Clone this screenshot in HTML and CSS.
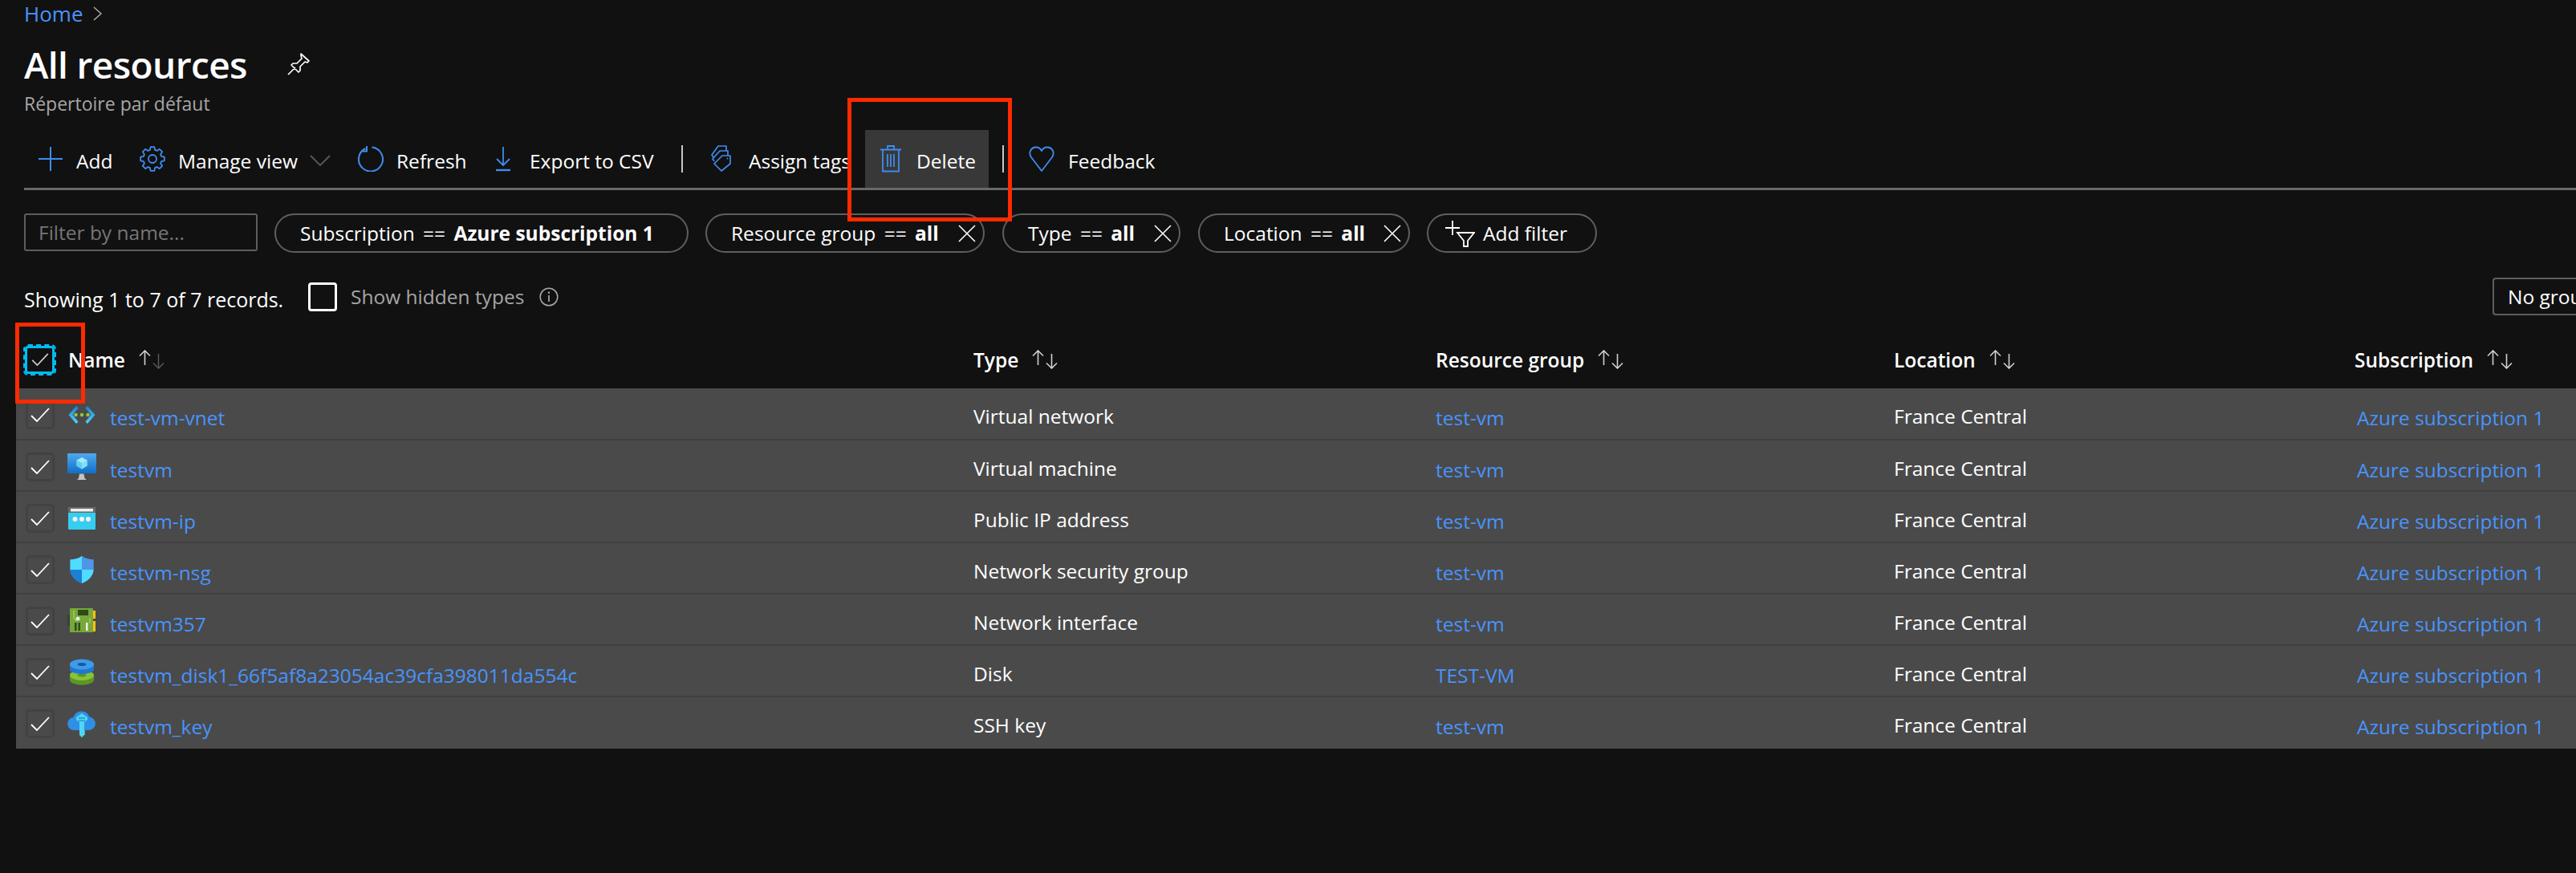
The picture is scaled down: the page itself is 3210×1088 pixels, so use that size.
FILE: index.html
```html
<!DOCTYPE html>
<html lang="en">
<head>
<meta charset="utf-8">
<title>All resources</title>
<link rel="stylesheet" href="styles.css">
</head>
<body>
<svg class="defs" width="0" height="0" aria-hidden="true">
  <symbol id="tick" viewBox="0 0 24 18"><path d="M1 10l7 7L23 1" fill="none" stroke="#fff" stroke-width="1.800"/></symbol>
  <symbol id="sort" viewBox="0 0 32 24"><path d="M7.500 19V1M1 7.500l6.500-6.500L14 7.500" fill="none" stroke="#d0d0d0" stroke-width="1.600"/><path d="M24.500 5v18M18 16.500l6.500 6.500L31 16.500" fill="none" stroke="#d0d0d0" stroke-width="1.600"/></symbol>
  <symbol id="sort-up" viewBox="0 0 32 24"><path d="M7.500 19V1M1 7.500l6.500-6.500L14 7.500" fill="none" stroke="#d0d0d0" stroke-width="1.600"/><path d="M24.500 5v18M18 16.500l6.500 6.500L31 16.500" fill="none" stroke="#555" stroke-width="1.600"/></symbol>
  <symbol id="close" viewBox="0 0 22 22"><path d="M1 1l20 20M21 1L1 21" fill="none" stroke="#fff" stroke-width="1.600"/></symbol>
</svg>

<nav class="crumb"><a class="link" href="#">Home</a>
  <svg class="crumb-chev" viewBox="0 0 12 18"><path d="M1 1l9 8-9 8" fill="none" stroke="#b0b0b0" stroke-width="1.400"/></svg>
</nav>
<header class="head">
  <h1 class="title">All resources</h1>
  <svg class="pin" viewBox="0 0 30 30"><path d="M18 2l10 9-2 2-3-1-6 6 0 5-2 2-9-9 2-2 5 0 6-6-1-4zM11 19L2 28" fill="none" stroke="#fff" stroke-width="1.700" stroke-linejoin="round"/></svg>
</header>
<p class="sub">Répertoire par défaut</p>

<div class="toolbar">
  <div class="tool w-add"><svg class="ti" viewBox="0 0 32 32"><path d="M16 1v30M1 16h30" fill="none" stroke="#3f8cf0" stroke-width="2"/></svg><span class="tl tl-add">Add</span></div>
  <div class="tool w-manage"><svg class="ti" viewBox="0 0 32 32"><polygon points="12.830,4.950 13.650,1.180 18.350,1.180 19.170,4.950 21.580,5.940 24.820,3.860 28.140,7.180 26.060,10.420 27.050,12.830 30.820,13.650 30.820,18.350 27.050,19.170 26.060,21.580 28.140,24.820 24.820,28.140 21.580,26.060 19.170,27.050 18.350,30.820 13.650,30.820 12.830,27.050 10.420,26.060 7.180,28.140 3.860,24.820 5.940,21.580 4.950,19.170 1.180,18.350 1.180,13.650 4.950,12.830 5.940,10.420 3.860,7.180 7.180,3.860 10.420,5.940" fill="none" stroke="#3f8cf0" stroke-width="1.800" stroke-linejoin="round"/><circle cx="16" cy="16" r="5" fill="none" stroke="#3f8cf0" stroke-width="1.800"/></svg><span class="tl tl-manage">Manage view</span><svg class="chev" viewBox="0 0 26 15"><path d="M1 1l12 12L25 1" fill="none" stroke="#5a5a5a" stroke-width="1.800"/></svg></div>
  <div class="tool w-refresh"><svg class="ti" viewBox="0 0 32 32"><path d="M17.500 1.600A15 15 0 1 1 9.500 3M11 0v6.500H4" fill="none" stroke="#3f8cf0" stroke-width="2"/></svg><span class="tl">Refresh</span></div>
  <div class="tool w-export"><svg class="ti ti-export" viewBox="0 0 20 32"><path d="M10 1v23M2 16l8 8 8-8" fill="none" stroke="#3f8cf0" stroke-width="1.800"/><path d="M1 30h18" stroke="#3f8cf0" stroke-width="2.400"/></svg><span class="tl tl-export">Export to CSV</span></div>
  <div class="sep"></div>
  <div class="tool w-tags"><svg class="ti ti-tag" viewBox="0 0 26 34"><path d="M4 23L14 13H24V23L13 32zM4 20L2 17 11 7H21V13M3 15L1 12 9 1H19V7" fill="none" stroke="#3f8cf0" stroke-width="1.700" stroke-linejoin="round"/><circle cx="20.500" cy="16.500" r="1" fill="#3f8cf0"/></svg><span class="tl tl-tags">Assign tags</span></div>
  <div class="tool w-delete"><svg class="ti ti-trash" viewBox="0 0 26 34"><path d="M0 5.500h26M9 5V1h8v4M3 6v26.500h20V6M9 11v16M13 11v16M17 11v16" fill="none" stroke="#3f8cf0" stroke-width="1.800"/></svg><span class="tl tl-delete">Delete</span></div>
  <div class="sep sep-b"></div>
  <div class="tool w-feedback"><svg class="ti" viewBox="0 0 32 32"><path d="M16 31L3 14C-1 8 3 1.500 9 1.500c3 0 5.500 1.500 7 4.500 1.500-3 4-4.500 7-4.500 6 0 10 6.500 6 12.500z" fill="none" stroke="#3f8cf0" stroke-width="1.800" stroke-linejoin="round"/></svg><span class="tl tl-feedback">Feedback</span></div>
</div>

<div class="filters">
  <div class="namebox">Filter by name...</div>
  <div class="pill p-sub"><span>Subscription <i class="eq">==</i> <b>Azure subscription 1</b></span></div>
  <div class="pill p-rg"><span>Resource group <i class="eq">==</i> <b>all</b></span><svg class="x"><use href="#close"/></svg></div>
  <div class="pill p-type"><span>Type <i class="eq">==</i> <b>all</b></span><svg class="x"><use href="#close"/></svg></div>
  <div class="pill p-loc"><span>Location <i class="eq">==</i> <b>all</b></span><svg class="x"><use href="#close"/></svg></div>
  <div class="pill p-add"><svg class="addf" viewBox="0 0 38 34"><path d="M10 1v18M1 10h18M16 16h21l-8 10v7h-5v-7z" fill="none" stroke="#fff" stroke-width="1.800"/></svg><span>Add filter</span></div>
</div>

<div class="status">
  <span class="count">Showing 1 to 7 of 7 records.</span>
  <span class="cb"></span>
  <span class="hidden-label">Show hidden types</span>
  <svg class="info" viewBox="0 0 24 24"><circle cx="12" cy="12" r="10.800" fill="none" stroke="#a8a8a8" stroke-width="1.500"/><path d="M12 10v8" stroke="#a8a8a8" stroke-width="1.700"/><circle cx="12" cy="6.800" r="1.200" fill="#a8a8a8"/></svg>
  <div class="group">No grouping</div>
</div>

<div class="thead">
  <span class="hcheck"><svg class="hcheck-tick"><use href="#tick"/></svg></span>
  <span class="th">Name<svg class="sort"><use href="#sort-up"/></svg></span>
  <span class="th">Type<svg class="sort"><use href="#sort"/></svg></span>
  <span class="th">Resource group<svg class="sort"><use href="#sort"/></svg></span>
  <span class="th">Location<svg class="sort"><use href="#sort"/></svg></span>
  <span class="th">Subscription<svg class="sort"><use href="#sort"/></svg></span>
</div>

<div class="tbody">
  <div class="row">
    <span class="rcheck"><svg class="rtick"><use href="#tick"/></svg></span>
    <svg class="ricon" viewBox="0 0 36 36"><defs><linearGradient id="gv" x1="0" y1="0" x2="0" y2="1"><stop offset="0" stop-color="#1a7fd8"/><stop offset="1" stop-color="#50d8fa"/></linearGradient></defs><path d="M11 7L1.500 18 11 29l2.500-2.500L6.500 18l7-8.500zM25 7l9.500 11L25 29l-2.500-2.500 7-8.500-7-8.500z" fill="url(#gv)"/><circle cx="10.500" cy="18" r="2.300" fill="#8cc63f"/><circle cx="18" cy="18" r="2.300" fill="#8cc63f"/><circle cx="25.500" cy="18" r="2.300" fill="#8cc63f"/></svg>
    <a class="link" href="#">test-vm-vnet</a><span class="cell">Virtual network</span><a class="link" href="#">test-vm</a><span class="cell">France Central</span><a class="link" href="#">Azure subscription 1</a>
  </div>
  <div class="row">
    <span class="rcheck"><svg class="rtick"><use href="#tick"/></svg></span>
    <svg class="ricon" viewBox="0 0 36 36"><defs><linearGradient id="gm" x1="0" y1="0" x2="0" y2="1"><stop offset="0" stop-color="#50a8f0"/><stop offset="1" stop-color="#0f6fc6"/></linearGradient></defs><rect x="0" y="1" width="36" height="25" rx="1" fill="url(#gm)"/><path d="M12 34h12l-2.500-2-1-5.500h-5.500l-1 5.500z" fill="#c4c4c4"/><path d="M18 6l6.500 3.500v7L18 20.500l-6.500-4v-7z" fill="#a4e8fb"/><path d="M18 13v7.500l-6.500-4v-7z" fill="#5cd0f2"/><path d="M18 13v7.500l6.500-4v-7z" fill="#83def7"/></svg>
    <a class="link" href="#">testvm</a><span class="cell">Virtual machine</span><a class="link" href="#">test-vm</a><span class="cell">France Central</span><a class="link" href="#">Azure subscription 1</a>
  </div>
  <div class="row">
    <span class="rcheck"><svg class="rtick"><use href="#tick"/></svg></span>
    <svg class="ricon" viewBox="0 0 36 36"><rect x="1" y="4" width="34" height="28" rx="1" fill="#35cdf0"/><path d="M1 5a1 1 0 0 1 1-1h32a1 1 0 0 1 1 1v6H1z" fill="#6a6a6a"/><rect x="4" y="6" width="28" height="3.500" fill="#eee"/><circle cx="9.500" cy="19" r="3" fill="#f2f2f2"/><circle cx="18" cy="19" r="3" fill="#f2f2f2"/><circle cx="26" cy="19" r="3" fill="#f2f2f2"/></svg>
    <a class="link" href="#">testvm-ip</a><span class="cell">Public IP address</span><a class="link" href="#">test-vm</a><span class="cell">France Central</span><a class="link" href="#">Azure subscription 1</a>
  </div>
  <div class="row">
    <span class="rcheck"><svg class="rtick"><use href="#tick"/></svg></span>
    <svg class="ricon" viewBox="0 0 36 36"><path d="M18 1c4 3 9 4 14.500 4.500V18c0 8-7 14-14.500 17C10.500 32 3.500 26 3.500 18V5.500C9 5 14 4 18 1z" fill="#3a8ee8"/><path d="M18 1v17H3.500V5.500C9 5 14 4 18 1zM18 18h14.500c0 8-7 14-14.500 17z" fill="#50dcff"/><path d="M18 1c4 3 9 4 14.500 4.500V18H18z" fill="#5096e8"/><path d="M3.500 18H18v17C10.500 32 3.500 26 3.500 18z" fill="#1a80d8"/></svg>
    <a class="link" href="#">testvm-nsg</a><span class="cell">Network security group</span><a class="link" href="#">test-vm</a><span class="cell">France Central</span><a class="link" href="#">Azure subscription 1</a>
  </div>
  <div class="row">
    <span class="rcheck"><svg class="rtick"><use href="#tick"/></svg></span>
    <svg class="ricon" viewBox="0 0 36 36"><rect x="0" y="10" width="4" height="14" fill="#3c3c3c"/><rect x="3" y="2" width="29" height="30" rx="1" fill="#76a83a"/><rect x="32" y="5" width="3" height="10" fill="#ffc20e"/><rect x="32" y="18" width="3" height="13" fill="#ffc20e"/><rect x="13" y="4" width="13" height="7" fill="#2f4a1c"/><path d="M8 5v9l3 4M28 14v7" fill="none" stroke="#b8d860" stroke-width="1"/><circle cx="13" cy="15" r="2.500" fill="#e8e8e8"/><rect x="9" y="20" width="2.500" height="10" fill="#2f4a1c"/><rect x="13.500" y="20" width="2.500" height="10" fill="#2f4a1c"/><rect x="23" y="20" width="2.500" height="10" fill="#eee"/></svg>
    <a class="link" href="#">testvm357</a><span class="cell">Network interface</span><a class="link" href="#">test-vm</a><span class="cell">France Central</span><a class="link" href="#">Azure subscription 1</a>
  </div>
  <div class="row">
    <span class="rcheck"><svg class="rtick"><use href="#tick"/></svg></span>
    <svg class="ricon" viewBox="0 0 36 36"><path d="M3 21.500v6c0 3.500 7 6 15 6s15-2.500 15-6v-6z" fill="#5e9624"/><ellipse cx="18" cy="21.500" rx="15" ry="6.500" fill="#86c33a"/><ellipse cx="18" cy="21.500" rx="5.500" ry="2" fill="#5e9624"/><path d="M3 8v6c0 3.500 7 6 15 6s15-2.500 15-6V8z" fill="#1e78d0"/><ellipse cx="18" cy="8" rx="15" ry="6.500" fill="#3f9be8"/><ellipse cx="18" cy="8" rx="5.500" ry="2" fill="#155a9e"/></svg>
    <a class="link" href="#">testvm_disk1_66f5af8a23054ac39cfa398011da554c</a><span class="cell">Disk</span><a class="link" href="#">TEST-VM</a><span class="cell">France Central</span><a class="link" href="#">Azure subscription 1</a>
  </div>
  <div class="row">
    <span class="rcheck"><svg class="rtick"><use href="#tick"/></svg></span>
    <svg class="ricon" viewBox="0 0 36 36"><path d="M9 26a8 8 0 0 1-1.500-16A10.500 10.500 0 0 1 27.500 9.500 8.300 8.300 0 0 1 27.500 26z" fill="#2f8fe6"/><path d="M18 5l7 5v3l-4 3v10l1.500 1.500L21 29l1.500 1.500L18 35l-3-3V16l-4-3v-3z" fill="#50d5f5"/><rect x="14" y="10" width="8" height="1.800" fill="#2a9cc8"/><rect x="14" y="13.500" width="8" height="1.500" fill="#2a9cc8"/></svg>
    <a class="link" href="#">testvm_key</a><span class="cell">SSH key</span><a class="link" href="#">test-vm</a><span class="cell">France Central</span><a class="link" href="#">Azure subscription 1</a>
  </div>
</div>

<div class="mark mark-delete"></div>
<div class="mark mark-check"></div>
</body>
</html>
```
FILE: styles.css
```css
* { box-sizing: border-box; }
html, body { margin: 0; height: 100%; overflow: hidden; }
body {
  background: #111111;
  color: #fff;
  font-family: "Open Sans", "Noto Sans", sans-serif;
  font-size: 24.5px;
}
.defs { position: absolute; }
.link { color: #4894fe; text-decoration: none; white-space: nowrap; }

.crumb { height: 34px; padding-left: 30px; display: flex; align-items: center; gap: 13px; font-size: 26px; }
.crumb-chev { width: 12px; height: 18px; }
.head { height: 64px; margin-top: 14px; padding-left: 30px; display: flex; align-items: center; gap: 49px; }
.title { margin: 0; font-size: 46px; font-weight: 600; letter-spacing: -0.6px; line-height: 64px; white-space: nowrap; }
.pin { width: 30px; height: 30px; }
.sub { margin: 1px 0 0; height: 32px; padding-left: 30px; font-size: 23px; line-height: 32px; color: #a6a6a6; }

.toolbar {
  margin: 17px 0 0 30px;
  height: 75px;
  padding: 0 0 3px 17px;
  border-bottom: 3px solid #686868;
  display: flex;
}
.tool { height: 72px; display: flex; align-items: center; white-space: nowrap; flex: none; }
.ti { width: 32px; height: 32px; flex: none; }
.ti-export { width: 20px; }
.ti-tag { width: 26px; height: 34px; }
.ti-trash { width: 26px; height: 34px; }
.tl { margin-left: 16px; padding-top: 4px; }
.tl-add { margin-left: 16px; }
.tl-manage { margin-left: 16px; }
.tl-export { margin-left: 23px; }
.tl-tags { margin-left: 21px; }
.tl-delete { margin-left: 19px; }
.tl-feedback { margin-left: 17px; }
.chev { width: 26px; height: 15px; margin-left: 15px; margin-top: 4px; }
.w-add { width: 127px; }
.w-manage { width: 272px; }
.w-refresh { width: 171px; }
.w-export { width: 232px; }
.sep { width: 2px; height: 34px; margin-top: 19px; background: #c8c8c8; flex: none; }
.w-tags { width: 192px; margin-left: 35px; }
.w-delete { width: 154px; padding-left: 19px; background: #383838; }
.sep-b { margin-left: 17px; }
.w-feedback { margin-left: 31px; }

.filters { margin: 29px 0 0 30px; height: 49px; display: flex; gap: 21px; }
.namebox {
  width: 291px; height: 47px; padding-left: 16px;
  border: 2px solid #5e5e5e; border-radius: 3px;
  color: #767676; line-height: 43px;
}
.pill {
  height: 49px; border: 2px solid #5e5e5e; border-radius: 25px;
  display: flex; align-items: center; padding-left: 30px; flex: none; white-space: nowrap;
}
.p-sub { width: 516px; }
.p-rg { width: 348px; }
.p-type { width: 222px; margin-left: 1px; }
.p-loc { width: 264px; margin-left: 1px; }
.p-add { width: 212px; padding-left: 20px; margin-left: 0; }
.pill span { flex: 1; }
.pill b { font-weight: 700; }
.eq { margin: 0 4px; font-style: normal; }
.x { width: 22px; height: 22px; margin-right: 9px; flex: none; }
.addf { width: 38px; height: 34px; margin-right: 10px; flex: none; }

.status { margin: 31px 0 0 30px; height: 47px; display: flex; align-items: center; }
.count { width: 354px; padding-top: 7px; flex: none; font-size: 25px; white-space: nowrap; }
.cb { width: 36px; height: 36px; border: 3px solid #fff; border-radius: 4px; flex: none; }
.hidden-label { margin-left: 17px; width: 235px; color: #a6a6a6; flex: none; white-space: nowrap; }
.info { width: 24px; height: 24px; flex: none; }
.group {
  margin-left: 2410px; flex: 1; min-width: 0; height: 47px; padding-left: 17px;
  border: 2px solid #5e5e5e; border-right: none; border-radius: 4px 0 0 4px; line-height: 43px;
  white-space: nowrap; overflow: hidden;
}

.thead {
  height: 91px; padding: 19px 0 0 30px;
  display: grid; grid-template-columns: 55px 1128px 576px 571px 574px 1fr; align-items: center;
}
.hcheck {
  width: 37px; height: 35px; margin-left: 1px; border: 3px solid #00bcf2; border-radius: 4px;
  outline: 2px dashed #00bcf2; outline-offset: 0;
  display: flex; align-items: center; justify-content: center;
}
.hcheck-tick { width: 22px; height: 16px; opacity: 0.8; }
.th { font-weight: 600; display: flex; align-items: center; gap: 17px; white-space: nowrap; }
.sort { width: 32px; height: 24px; }

.tbody { margin-left: 20px; }
.row {
  height: 64px; padding: 3px 0 0 12px; background: #4a4a4a; border-bottom: 2px solid #404040;
  display: grid; grid-template-columns: 52px 53px 1076px 576px 571px 577px 1fr; align-items: center;
}
.row:first-child { height: 65px; }
.row:last-child { border-bottom-color: #4a4a4a; }
.row .link { padding-top: 7px; }
.rcheck {
  width: 36px; height: 36px; border: 3px solid #424242; border-radius: 5px;
  display: flex; align-items: center; justify-content: center;
}
.rtick { width: 24px; height: 18px; }
.ricon { width: 36px; height: 36px; }
.cell { padding-top: 3px; white-space: nowrap; }

.mark { position: absolute; border: 5px solid #ff2a00; pointer-events: none; }
.mark-delete { left: 1056px; top: 122px; width: 205px; height: 154px; }
.mark-check { left: 19px; top: 402px; width: 87px; height: 101px; }
```
